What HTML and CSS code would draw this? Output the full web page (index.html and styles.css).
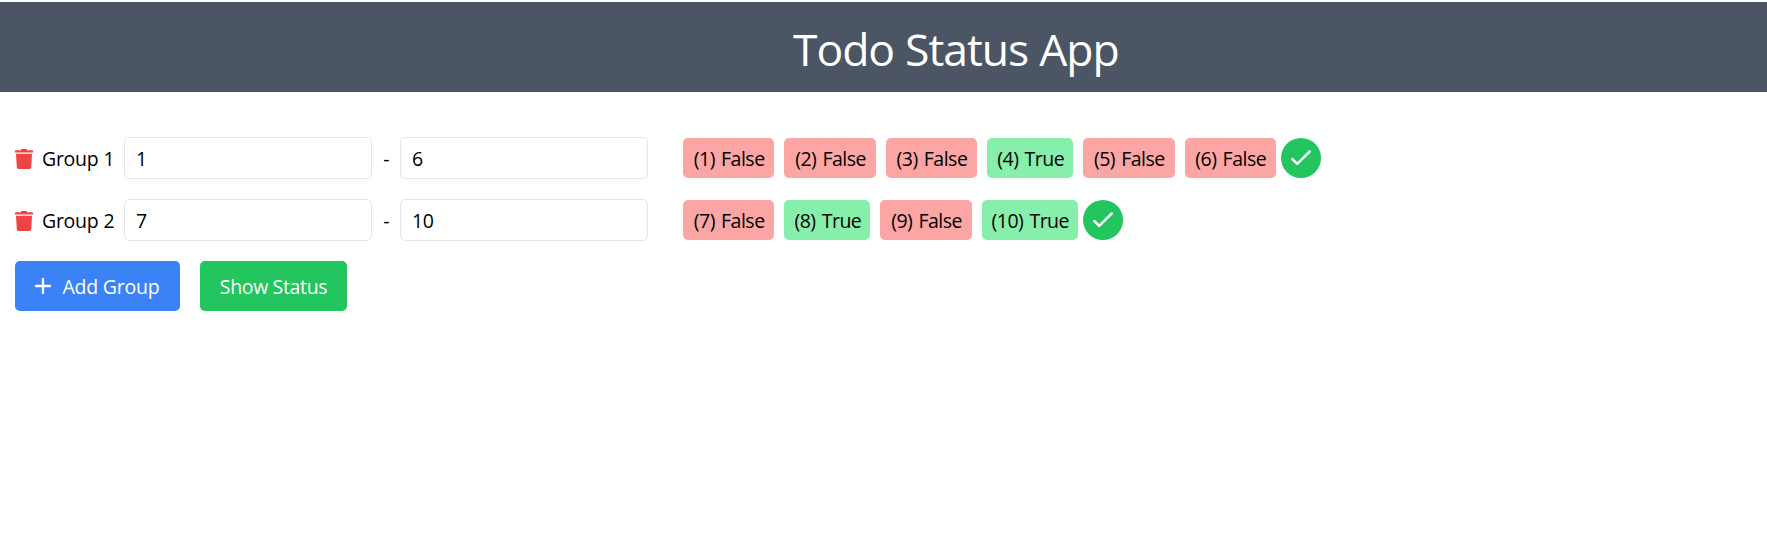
FILE: index.html
```html
<!DOCTYPE html>
<html lang="en">
<head>
<meta charset="utf-8">
<title>Todo Status App</title>
<link rel="stylesheet" href="styles.css">
</head>
<body>
<svg class="symbols" aria-hidden="true">
  <symbol id="trash" viewBox="0 0 18 20"><path d="M6 1.300V.8Q6 0 7 0h4q1 0 1 .8v.5h5q1 0 1 .8v1.300H0V2.100q0-.8 1-.8zM1 4.700h16l-.7 13.500q-.1 1.800-1.900 1.800H3.700q-1.800 0-1.900-1.800z" fill="currentColor"/></symbol>
  <symbol id="check" viewBox="0 0 20 16"><path d="M1.300 9 6.200 13.800 18.700 1.500" fill="none" stroke="currentColor" stroke-width="2.500" stroke-linecap="round" stroke-linejoin="round"/></symbol>
  <symbol id="plus" viewBox="0 0 16 16"><path d="M8 1v14M1 8h14" fill="none" stroke="currentColor" stroke-width="2.300" stroke-linecap="round"/></symbol>
</svg>
<header class="header"><h1 class="title">Todo Status App</h1></header>
<main class="content">
  <div class="row">
    <svg class="trash"><use href="#trash"/></svg>
    <span class="label">Group 1</span>
    <input class="field" type="text" value="1">
    <span class="dash">-</span>
    <input class="field" type="text" value="6">
    <div class="chips">
      <span class="chip false">(1) False</span>
      <span class="chip false">(2) False</span>
      <span class="chip false">(3) False</span>
      <span class="chip true">(4) True</span>
      <span class="chip false">(5) False</span>
      <span class="chip false">(6) False</span>
    </div>
    <span class="done"><svg class="check"><use href="#check"/></svg></span>
  </div>
  <div class="row">
    <svg class="trash"><use href="#trash"/></svg>
    <span class="label">Group 2</span>
    <input class="field" type="text" value="7">
    <span class="dash">-</span>
    <input class="field" type="text" value="10">
    <div class="chips">
      <span class="chip false">(7) False</span>
      <span class="chip true">(8) True</span>
      <span class="chip false">(9) False</span>
      <span class="chip true wide">(10) True</span>
    </div>
    <span class="done"><svg class="check"><use href="#check"/></svg></span>
  </div>
  <div class="actions">
    <button class="button add"><svg class="plus"><use href="#plus"/></svg><span>Add Group</span></button>
    <button class="button show">Show Status</button>
  </div>
</main>
</body>
</html>
```
FILE: styles.css
```css
* { box-sizing: border-box; }
body {
  margin: 0;
  padding-top: 2px;
  background: #fff;
  color: #000;
  font-family: "Segoe UI", "Open Sans", "Noto Sans", sans-serif;
  font-size: 19.500px;
  line-height: 30px;
}
.symbols { display: none; }
.header {
  height: 90px;
  padding: 19px 0 0 793px;
  background: #4b5563;
  color: #fff;
}
.title {
  margin: 0;
  font-size: 44.500px;
  font-weight: 400;
  line-height: 56px;
  letter-spacing: -1.050px;
  word-spacing: 0.5px;
  white-space: nowrap;
}
.content { padding: 45px 15px 0; }
.row { display: flex; align-items: center; height: 42px; margin-bottom: 20px; }
.trash { width: 18px; height: 20px; margin-top: 2px; color: #ef4444; }
.label {
  width: 82px;
  margin-left: 9px;
  padding-top: 2px;
  white-space: nowrap;
  letter-spacing: -0.3px;
  word-spacing: 0.5px;
}
.field {
  width: 248px;
  height: 42px;
  padding: 0 11px;
  border: 1px solid #e5e7eb;
  border-radius: 5px;
  background: #fff;
  color: inherit;
  font: inherit;
  letter-spacing: -0.5px;
}
.dash { width: 28px; padding: 2px 0 0 1px; text-align: center; }
.chips { display: flex; gap: 10px; margin-left: 35px; }
.chip {
  width: 91.400px;
  height: 40px;
  padding: 6px 0 4px 1px;
  border-radius: 5px;
  text-align: center;
  white-space: nowrap;
  letter-spacing: -0.5px;
  word-spacing: 1.500px;
}
.false { background: #fca5a5; }
.true { width: 86px; background: #86efac; }
.wide { width: 96px; }
.done {
  display: flex;
  align-items: center;
  justify-content: center;
  width: 40px;
  height: 40px;
  margin-left: 5px;
  border-radius: 50%;
  background: #22c55e;
  color: #fff;
}
.check { width: 20px; height: 16px; }
.actions { display: flex; gap: 20px; }
.button {
  display: flex;
  align-items: center;
  justify-content: center;
  height: 50px;
  padding: 2px 0 0;
  border: 0;
  border-radius: 5px;
  color: #fff;
  font: inherit;
  letter-spacing: -0.350px;
  white-space: nowrap;
}
.add { width: 165px; gap: 11px; background: #3b82f6; letter-spacing: -0.2px; }
.show { width: 147px; background: #22c55e; }
.plus { width: 16px; height: 16px; margin-top: -2px; }
```
